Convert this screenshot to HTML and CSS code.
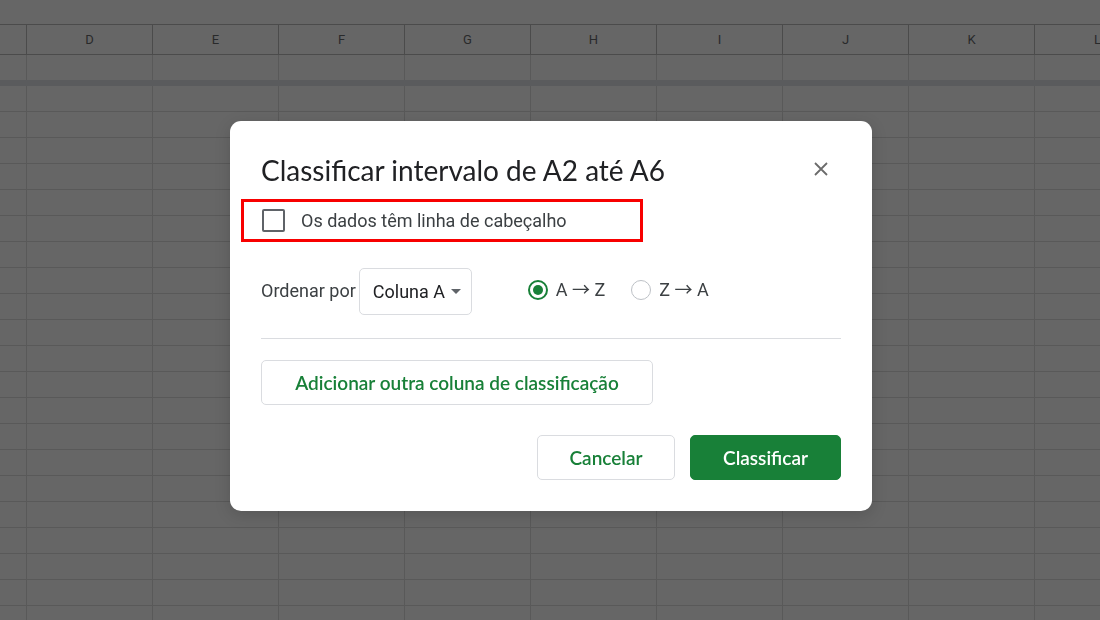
FILE: index.html
```html
<!DOCTYPE html>
<html lang="pt">
<head>
<meta charset="utf-8">
<title>Classificar intervalo</title>
<link rel="stylesheet" href="styles.css">
</head>
<body>
<main class="sheet">
  <table class="grid">
    <thead>
      <tr><th class="edge"></th><th>D</th><th>E</th><th>F</th><th>G</th><th>H</th><th>I</th><th>J</th><th>K</th><th>L</th></tr>
    </thead>
    <tbody>
      <tr class="first"><td><td><td><td><td><td><td><td><td><td></tr>
      <tr class="frozen"><td colspan="10"></td></tr>
      <tr><td><td><td><td><td><td><td><td><td><td></tr>
      <tr><td><td><td><td><td><td><td><td><td><td></tr>
      <tr><td><td><td><td><td><td><td><td><td><td></tr>
      <tr><td><td><td><td><td><td><td><td><td><td></tr>
      <tr><td><td><td><td><td><td><td><td><td><td></tr>
      <tr><td><td><td><td><td><td><td><td><td><td></tr>
      <tr><td><td><td><td><td><td><td><td><td><td></tr>
      <tr><td><td><td><td><td><td><td><td><td><td></tr>
      <tr><td><td><td><td><td><td><td><td><td><td></tr>
      <tr><td><td><td><td><td><td><td><td><td><td></tr>
      <tr><td><td><td><td><td><td><td><td><td><td></tr>
      <tr><td><td><td><td><td><td><td><td><td><td></tr>
      <tr><td><td><td><td><td><td><td><td><td><td></tr>
      <tr><td><td><td><td><td><td><td><td><td><td></tr>
      <tr><td><td><td><td><td><td><td><td><td><td></tr>
      <tr><td><td><td><td><td><td><td><td><td><td></tr>
      <tr><td><td><td><td><td><td><td><td><td><td></tr>
      <tr><td><td><td><td><td><td><td><td><td><td></tr>
      <tr><td><td><td><td><td><td><td><td><td><td></tr>
      <tr><td><td><td><td><td><td><td><td><td><td></tr>
      <tr><td><td><td><td><td><td><td><td><td><td></tr>
    </tbody>
  </table>
</main>
<div class="overlay">
  <form class="dialog" role="dialog" aria-labelledby="dialog-title">
    <header class="dialog-header">
      <h1 class="title" id="dialog-title">Classificar intervalo de A2 até A6</h1>
      <button class="close" type="button" aria-label="Fechar">
        <svg width="14" height="14" viewBox="0 0 14 14" aria-hidden="true"><path d="M1 1l12 12M13 1L1 13" fill="none" stroke="#6b6b6b" stroke-width="1.8"/></svg>
      </button>
    </header>
    <label class="header-option">
      <input class="checkbox" type="checkbox">
      <span>Os dados têm linha de cabeçalho</span>
    </label>
    <div class="sort-row">
      <label class="sort-label" for="column">Ordenar por</label>
      <span class="select-box">
        <select class="select" id="column"><option>Coluna A</option></select>
        <svg class="caret" width="10" height="5" viewBox="0 0 10 5" aria-hidden="true"><path d="M0 0h10L5 5z" fill="#5f6368"/></svg>
      </span>
      <div class="orders">
        <label class="order"><input class="radio" type="radio" name="order" checked><span>A <span class="arrow">→</span> Z</span></label>
        <label class="order"><input class="radio" type="radio" name="order"><span>Z <span class="arrow">→</span> A</span></label>
      </div>
    </div>
    <hr class="divider">
    <button class="button button-add" type="button">Adicionar outra coluna de classificação</button>
    <footer class="actions">
      <button class="button button-cancel" type="button">Cancelar</button>
      <button class="button button-primary" type="submit">Classificar</button>
    </footer>
  </form>
</div>
</body>
</html>
```

FILE: styles.css
```css
* {
  box-sizing: border-box;
}

body {
  margin: 0;
  background: #666;
  color: #3c4043;
  font-family: Roboto, "Liberation Sans", sans-serif;
  font-size: 18px;
}

.sheet {
  height: 100vh;
  padding-top: 24px;
  overflow: hidden;
}

.grid {
  width: 1161px;
  table-layout: fixed;
  border-collapse: separate;
  border-spacing: 0;
}

.grid th {
  width: 126px;
  height: 31px;
  padding: 0;
  border: solid #4b4b4b;
  border-width: 1px 1px 1px 0;
  color: #292a2b;
  font-size: 13px;
  font-weight: 400;
}

.grid th.edge {
  width: 27px;
}

.grid td {
  height: 26px;
  padding: 0;
  border: solid #595959;
  border-width: 0 1px 1px 0;
}

.grid .first td {
  height: 25px;
  border-bottom: 0;
}

.grid .frozen td {
  height: 6px;
  border: 0;
  background: #5a5b5d;
}

.overlay {
  position: fixed;
  inset: 0;
  display: grid;
  grid-template-columns: minmax(0, 642px);
  place-content: center;
  padding: 12px 0 0 2px;
}

.dialog {
  display: flex;
  flex-direction: column;
  align-items: flex-start;
  padding: 28px 31px 31px;
  border-radius: 11px;
  background: #fff;
  box-shadow: 0 4px 16px rgba(0, 0, 0, 0.15);
}

.dialog-header {
  display: flex;
  align-self: stretch;
  align-items: center;
  justify-content: space-between;
}

.title {
  margin: 0;
  padding-top: 2px;
  color: #202124;
  font-family: Lato, sans-serif;
  font-size: 28px;
  font-weight: 400;
  line-height: 38px;
}

.close {
  display: grid;
  place-items: center;
  width: 40px;
  height: 40px;
  padding: 0;
  border: 0;
  background: none;
}

.header-option {
  display: flex;
  align-items: center;
  gap: 16px;
  width: 402px;
  height: 43px;
  margin: 10px 0 0 -20px;
  padding: 0 18px;
  border: 3px solid #f80000;
}

.checkbox {
  appearance: none;
  width: 23px;
  height: 23px;
  margin: 0;
  border: 2px solid #5f6368;
  border-radius: 2px;
}

.sort-row {
  display: flex;
  align-items: center;
  margin-top: 26px;
}

.sort-label {
  margin-right: 3px;
  padding-bottom: 2px;
}

.select-box {
  position: relative;
}

.select {
  appearance: none;
  display: block;
  width: 113px;
  height: 47px;
  padding: 0 13px;
  border: 1px solid #dadce0;
  border-radius: 5px;
  background: #fff;
  color: #202124;
  font: inherit;
}

.caret {
  position: absolute;
  top: 21px;
  right: 11px;
  pointer-events: none;
}

.orders {
  display: flex;
  gap: 26px;
  margin-left: 56px;
  padding-bottom: 3px;
}

.order {
  display: flex;
  align-items: center;
  gap: 8px;
  line-height: 22px;
}

.arrow {
  font-family: "Noto Sans CJK JP", sans-serif;
  line-height: 1;
}

.radio {
  appearance: none;
  width: 20px;
  height: 20px;
  margin: 0;
  border: 1px solid #bdc1c6;
  border-radius: 50%;
}

.radio:checked {
  padding: 3px;
  border: 2px solid #188038;
  background: #188038 content-box;
}

.divider {
  align-self: stretch;
  height: 1px;
  margin: 23px 0 21px;
  border: 0;
  background: #dadce0;
}

.button {
  height: 45px;
  padding: 0 20px 1px;
  border: 1px solid #dadce0;
  border-radius: 5px;
  background: #fff;
  color: #188038;
  font-family: Lato, sans-serif;
  font-size: 19px;
  font-weight: 600;
}

.button-add {
  width: 392px;
}

.button-cancel {
  width: 138px;
}

.button-primary {
  width: 151px;
  border-color: #188038;
  background: #188038;
  color: #fff;
}

.actions {
  display: flex;
  align-self: flex-end;
  gap: 15px;
  margin-top: 30px;
}
```
